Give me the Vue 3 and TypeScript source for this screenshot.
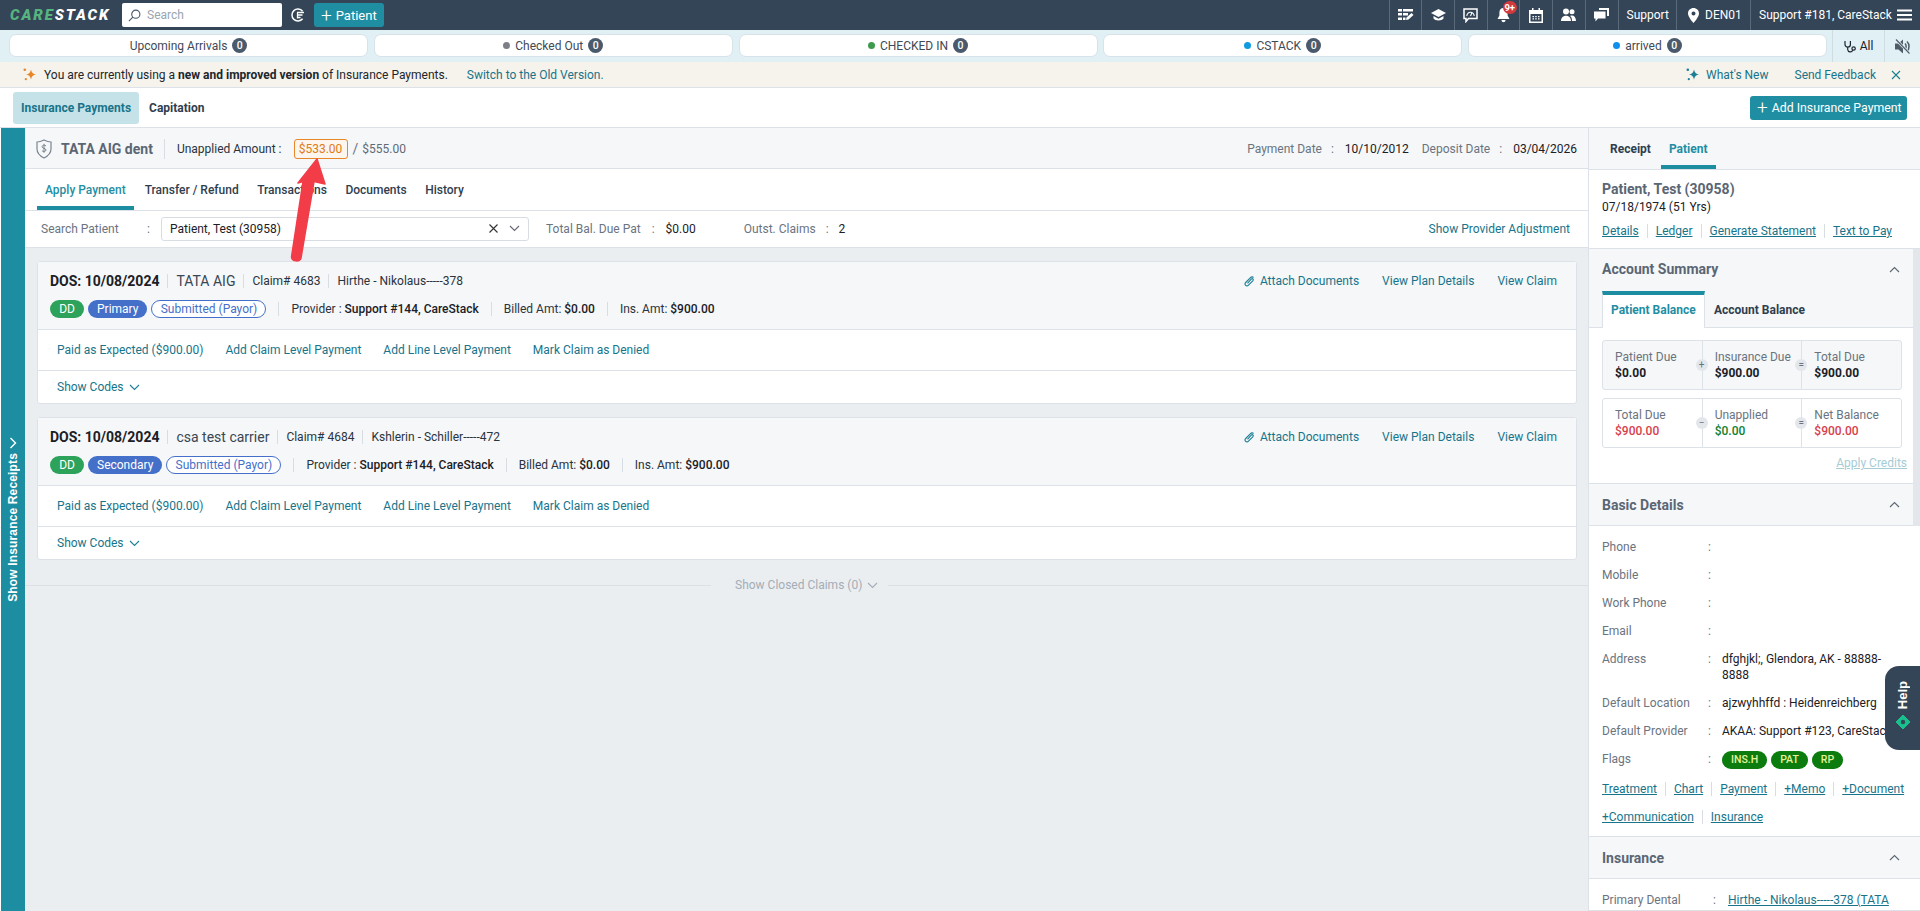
<script setup lang="ts">
interface Claim {
  carrier: string;
  claimNo: string;
  subscriber: string;
  rank: string;
}

const statusPills = [
  { label: 'Upcoming Arrivals', dot: '' },
  { label: 'Checked Out', dot: '#7c8086' },
  { label: 'CHECKED IN', dot: '#3f9a4e' },
  { label: 'CSTACK', dot: '#0f9be0' },
  { label: 'arrived', dot: '#0f8fee' },
];

const claims: Claim[] = [
  { carrier: 'TATA AIG', claimNo: '4683', subscriber: 'Hirthe - Nikolaus-----378', rank: 'Primary' },
  { carrier: 'csa test carrier', claimNo: '4684', subscriber: 'Kshlerin - Schiller-----472', rank: 'Secondary' },
];

const claimActions = ['Paid as Expected ($900.00)', 'Add Claim Level Payment', 'Add Line Level Payment', 'Mark Claim as Denied'];
const pageTabs = ['Transfer / Refund', 'Transactions', 'Documents', 'History'];

const balanceRows = [
  [
    { label: 'Patient Due', value: '$0.00', tone: '', op: '+' },
    { label: 'Insurance Due', value: '$900.00', tone: '', op: '=' },
    { label: 'Total Due', value: '$900.00', tone: '', op: '' },
  ],
  [
    { label: 'Total Due', value: '$900.00', tone: 'red', op: '−' },
    { label: 'Unapplied', value: '$0.00', tone: 'green', op: '=' },
    { label: 'Net Balance', value: '$900.00', tone: 'red', op: '' },
  ],
];

const details = [
  { label: 'Phone', value: '' },
  { label: 'Mobile', value: '' },
  { label: 'Work Phone', value: '' },
  { label: 'Email', value: '' },
  { label: 'Address', value: 'dfghjkl;, Glendora, AK - 88888-8888' },
  { label: 'Default Location', value: 'ajzwyhhffd : Heidenreichberg' },
  { label: 'Default Provider', value: 'AKAA: Support #123, CareStack' },
];

const flags = ['INS.H', 'PAT', 'RP'];
const quickLinks = [
  ['Treatment', 'Chart', 'Payment', '+Memo', '+Document'],
  ['+Communication', 'Insurance'],
];
</script>

<template>
  <div class="page">
    <header class="topbar">
      <div class="logo"><span class="logo-care">CARE</span><span>STACK</span></div>
      <div class="search">
        <svg width="13" height="13" viewBox="0 0 14 14" fill="none" stroke="#46586a" stroke-width="1.2">
          <circle cx="8.4" cy="5.6" r="4.4" />
          <path d="M5.2 8.8 1 13" />
        </svg>
        <span>Search</span>
      </div>
      <svg class="recent" width="16" height="16" viewBox="0 0 16 16" fill="none" stroke="#fff" stroke-width="1.5">
        <path d="M12.6 11.8A6 6 0 1 1 12.6 4.2" />
        <path d="M7 5.5h7M7.5 8h5M7.5 10.500h3M7.500 5.500v6" stroke-width="1.3" />
      </svg>
      <button class="btn patient-btn"><span class="plus">+</span>Patient</button>

      <div class="topbar-right">
        <div class="top-icon">
          <svg width="16" height="14" viewBox="0 0 16 14" fill="#fff">
            <path d="M0 1h4v2.500H0zM5 1h10v2.500H5zM0 5h4v2.500H0zM0 9.500h4V12H0zM5 5h5v2.500H5zM5 9.500h2.500V12H5z" />
            <path d="m8 12 .5-2.500L13.500 5l2 2-5 4.500z" />
          </svg>
        </div>
        <div class="top-icon">
          <svg width="15" height="13" viewBox="0 0 15 13" fill="#fff">
            <path d="M7.500 0 15 4l-7.500 4L0 4z" />
            <path d="M2.500 7v2.500C4 12 11 12 12.500 9.500V7l-5 2.700z" />
          </svg>
        </div>
        <div class="top-icon">
          <svg width="15" height="15" viewBox="0 0 15 15" fill="none" stroke="#fff" stroke-width="1.500">
            <path d="M1 1h13v9.500H5.500L3 13.500v-3H1z" />
            <path d="M3.800 8a3.700 3.700 0 1 1 7.400 0M7.500 8l1.300-3" stroke-width="1.100" />
          </svg>
        </div>
        <div class="top-icon bell">
          <svg width="13" height="15" viewBox="0 0 13 15" fill="#fff">
            <path d="M6.500 0C3.800 0 2.400 2 2.400 4.500v3L.5 11h12l-1.900-3.500v-3C10.600 2 9.200 0 6.500 0zM4.500 12h4c0 3-4 3-4 0z" />
          </svg>
          <span class="bell-badge">9+</span>
        </div>
        <div class="top-icon">
          <svg width="14" height="15" viewBox="0 0 14 15" fill="#fff">
            <path d="M3 0h1.500v2h5V0H11v2h3v13H0V2h3zM1.500 6v7.500h11V6z" />
            <path d="M3.500 8h1.500v1.300H3.500zM6.200 8h1.500v1.300H6.200zM9 8h1.500v1.300H9zM3.500 10.300h1.500v1.300H3.500zM6.200 10.300h1.500v1.300H6.200zM9 10.300h1.500v1.300H9z" />
          </svg>
        </div>
        <div class="top-icon">
          <svg width="15" height="14" viewBox="0 0 15 14" fill="#fff">
            <circle cx="5" cy="3.500" r="3" />
            <circle cx="11" cy="3.800" r="2.500" />
            <path d="M0 13c0-7 10-7 10 0zM11 13c0-2.500-.5-4-2-5 3-1.500 6 .5 6 5z" />
          </svg>
        </div>
        <div class="top-icon">
          <svg width="15" height="14" viewBox="0 0 15 14" fill="#fff">
            <path d="M5 0h10v8h-2V2H5z" />
            <path d="M0 3.500h11.500v7H4L1.500 13.500v-3H0z" />
          </svg>
        </div>
        <div class="top-item support">Support</div>
        <div class="top-item location">
          <svg width="11" height="15" viewBox="0 0 11 15" fill="#fff">
            <path fill-rule="evenodd" d="M5.500 0C2.500 0 0 2.300 0 5.400 0 9 5.500 15 5.500 15S11 9 11 5.400C11 2.300 8.500 0 5.500 0zm0 3.500a2 2 0 1 1 0 4 2 2 0 0 1 0-4z" />
          </svg>
          DEN01
        </div>
        <div class="top-item user">
          Support #181, CareStack
          <svg width="15" height="12" viewBox="0 0 15 12" fill="#fff">
            <path d="M0 .5h15v2H0zM0 5h15v2H0zM0 9.500h15v2H0z" />
          </svg>
        </div>
      </div>
    </header>

    <div class="status-row">
      <div class="status-pills">
        <div v-for="pill in statusPills" :key="pill.label" class="status-pill">
          <i v-if="pill.dot" class="dot" :style="{ background: pill.dot }"></i>
          <span>{{ pill.label }}</span>
          <b class="count">0</b>
        </div>
      </div>
      <div class="status-all">
        <svg width="12" height="13" viewBox="0 0 12 13" fill="none" stroke="#1c2530" stroke-width="1.200">
          <path d="M1 1v3.500a2.700 2.700 0 0 0 5.400 0V1M3.700 7.200v2.300a2.600 2.600 0 0 0 5 .8" />
          <circle cx="9.600" cy="8.500" r="1.700" />
        </svg>
        All
      </div>
      <div class="status-mute">
        <svg width="17" height="15" viewBox="0 0 17 15" fill="#4f5b66">
          <path d="M1 4.500h3.500L9 .5v14l-4.500-4H1z" />
          <path d="M11 4.500c1.500 1.500 1.500 4.500 0 6M13 2.500c2.700 2.700 2.700 7.300 0 10" fill="none" stroke="#4f5b66" stroke-width="1.500" />
          <path d="m2 .5 13.500 14" stroke="#e1f0f5" stroke-width="2.600" />
          <path d="m2 .5 13.500 14" stroke="#4f5b66" stroke-width="1.100" />
        </svg>
      </div>
    </div>

    <div class="banner">
      <svg class="spark" width="13" height="13" viewBox="0 0 13 13" fill="#e8862a">
        <path d="M8 1.500c.6 3 2 4.500 5 5-3 .5-4.400 2-5 5-.6-3-2-4.500-5-5 3-.5 4.400-2 5-5z" />
        <circle cx="1.800" cy="1.800" r="1.300" />
        <circle cx="2.800" cy="11.200" r="1.100" />
      </svg>
      <span class="banner-text">You are currently using a <b>new and improved version</b> of Insurance Payments.</span>
      <a class="link switch">Switch to the Old Version.</a>
      <div class="banner-right">
        <svg width="13" height="13" viewBox="0 0 13 13" fill="#1b7f94">
          <path d="M8 1.500c.6 3 2 4.500 5 5-3 .5-4.400 2-5 5-.6-3-2-4.500-5-5 3-.5 4.400-2 5-5z" />
          <circle cx="1.800" cy="1.800" r="1.300" />
          <circle cx="2.800" cy="11.200" r="1.100" />
        </svg>
        <a class="link whats">What's New</a>
        <a class="link">Send Feedback</a>
        <svg class="close" width="10" height="10" viewBox="0 0 10 10" stroke="#1b7f94" stroke-width="1.100">
          <path d="m1 1 8 8M9 1 1 9" />
        </svg>
      </div>
    </div>

    <div class="module-tabs">
      <div class="module-tab active">Insurance Payments</div>
      <div class="module-tab">Capitation</div>
      <button class="btn add-btn"><span class="plus">+</span>Add Insurance Payment</button>
    </div>

    <div class="workspace">
      <aside class="receipts-strip">
        <span class="strip-label">Show Insurance Receipts</span>
        <svg width="8" height="12" viewBox="0 0 8 12" fill="none" stroke="#fff" stroke-width="1.400">
          <path d="m1.500 1 5 5-5 5" />
        </svg>
      </aside>

      <main class="center">
        <div class="pay-head">
          <svg width="16" height="20" viewBox="0 0 16 20" fill="none" stroke="#7b8590" stroke-width="1.200">
            <path d="M1 3c2.500 0 5-1 7-2 2 1 4.500 2 7 2v7c0 4-3 7-7 9-4-2-7-5-7-9z" />
            <path d="M10 7c-1-1.300-4-1-4 .7 0 2 4 1.300 4 3.300 0 1.700-3 2-4 .7M8 4.800v9" stroke-width="1" />
          </svg>
          <span class="carrier-name">TATA AIG dent</span>
          <i class="vsep tall"></i>
          <span class="unapplied">Unapplied Amount :</span>
          <span class="amount-badge">$533.00</span>
          <span class="amount-slash">/</span>
          <span class="amount-total">$555.00</span>
          <div class="dates">
            <span class="muted">Payment Date</span><span class="muted colon">:</span><span>10/10/2012</span>
            <span class="muted deposit">Deposit Date</span><span class="muted colon">:</span><span>03/04/2026</span>
          </div>
        </div>

        <nav class="page-tabs">
          <div class="page-tab active">Apply Payment</div>
          <div v-for="tab in pageTabs" :key="tab" class="page-tab">{{ tab }}</div>
        </nav>

        <div class="search-row">
          <span class="muted sp-label">Search Patient</span>
          <span class="muted sp-colon">:</span>
          <div class="patient-select">
            <span>Patient, Test (30958)</span>
            <svg class="sel-x" width="9" height="9" viewBox="0 0 9 9" stroke="#333" stroke-width="1.100">
              <path d="m.5.5 8 8M8.500.5l-8 8" />
            </svg>
            <svg width="11" height="7" viewBox="0 0 11 7" fill="none" stroke="#667" stroke-width="1.100">
              <path d="m1 1 4.500 4.500L10 1" />
            </svg>
          </div>
          <span class="muted">Total Bal. Due Pat</span>
          <span class="muted bal-colon">:</span>
          <span class="bal-val">$0.00</span>
          <span class="muted">Outst. Claims</span>
          <span class="muted bal-colon claims-colon">:</span>
          <span>2</span>
          <a class="link provider-adj">Show Provider Adjustment</a>
        </div>

        <div class="claims">
          <section v-for="claim in claims" :key="claim.claimNo" class="claim-card">
            <div class="claim-head">
              <div class="claim-line first">
                <b class="dos">DOS: 10/08/2024</b>
                <i class="vsep"></i>
                <span class="carrier">{{ claim.carrier }}</span>
                <i class="vsep"></i>
                <span>Claim# {{ claim.claimNo }}</span>
                <i class="vsep"></i>
                <span>{{ claim.subscriber }}</span>
                <div class="claim-links">
                  <a class="link attach">
                    <svg width="11" height="11" viewBox="0 0 11 11" fill="none" stroke="#1b7f94" stroke-width="1.100">
                      <path d="M9.500 1.500c-1-1-2-.8-3 .2L1.700 6.500c-1 1-1 2 0 2.800.8.800 1.800.8 2.800-.2l4.300-4.300c.7-.7.7-1.300.2-1.800s-1.100-.5-1.800.2L3.500 7.300" />
                    </svg>
                    Attach Documents
                  </a>
                  <a class="link">View Plan Details</a>
                  <a class="link">View Claim</a>
                </div>
              </div>
              <div class="claim-line second">
                <span class="chip dd">DD</span>
                <span class="chip rank">{{ claim.rank }}</span>
                <span class="chip outline">Submitted (Payor)</span>
                <i class="vsep chip-sep"></i>
                <span>Provider : <b class="m">Support #144, CareStack</b></span>
                <i class="vsep"></i>
                <span>Billed Amt: <b class="m">$0.00</b></span>
                <i class="vsep"></i>
                <span>Ins. Amt: <b class="m">$900.00</b></span>
              </div>
            </div>
            <div class="claim-actions">
              <a v-for="action in claimActions" :key="action" class="link">{{ action }}</a>
            </div>
            <div class="claim-codes">
              <a class="link">Show Codes</a>
              <svg width="11" height="7" viewBox="0 0 11 7" fill="none" stroke="#1b7f94" stroke-width="1.100">
                <path d="m1 1 4.500 4.500L10 1" />
              </svg>
            </div>
          </section>
        </div>

        <div class="closed-claims">
          <i class="line-left"></i>
          <span>Show Closed Claims (0)</span>
          <svg width="11" height="7" viewBox="0 0 11 7" fill="none" stroke="#a3adb6" stroke-width="1.100">
            <path d="m1 1 4.500 4.500L10 1" />
          </svg>
          <i class="line-right"></i>
        </div>
      </main>

      <aside class="side">
        <div class="side-tabs">
          <div class="side-tab">Receipt</div>
          <div class="side-tab active">Patient</div>
        </div>
        <div class="side-patient">
          <div class="side-name">Patient, Test (30958)</div>
          <div class="side-dob">07/18/1974 (51 Yrs)</div>
          <div class="u-links">
            <a>Details</a><a>Ledger</a><a>Generate Statement</a><a>Text to Pay</a>
          </div>
        </div>

        <div class="side-scroll">
          <div class="scroll-thumb"></div>

          <div class="side-head first">
            <span>Account Summary</span>
            <svg width="11" height="7" viewBox="0 0 11 7" fill="none" stroke="#5c6773" stroke-width="1.100">
              <path d="m1 6 4.500-4.500L10 6" />
            </svg>
          </div>
          <div class="summary-tabs">
            <div class="summary-tab active">Patient Balance</div>
            <div class="summary-tab">Account Balance</div>
          </div>
          <div class="summary">
            <div v-for="(row, i) in balanceRows" :key="i" class="bal-row" :class="{ shaded: i === 0 }">
              <div v-for="cell in row" :key="cell.label" class="bal-cell">
                <span class="muted">{{ cell.label }}</span>
                <b :class="cell.tone">{{ cell.value }}</b>
                <i v-if="cell.op" class="op">{{ cell.op }}</i>
              </div>
            </div>
            <a class="apply-credits">Apply Credits</a>
          </div>

          <div class="side-head">
            <span>Basic Details</span>
            <svg width="11" height="7" viewBox="0 0 11 7" fill="none" stroke="#5c6773" stroke-width="1.100">
              <path d="m1 6 4.500-4.500L10 6" />
            </svg>
          </div>
          <div class="basic">
            <div v-for="row in details" :key="row.label" class="detail-row">
              <span class="muted">{{ row.label }}</span>
              <span class="muted">:</span>
              <span class="detail-val">{{ row.value }}</span>
            </div>
            <div class="detail-row flags-row">
              <span class="muted">Flags</span>
              <span class="muted">:</span>
              <span class="flags"><b v-for="flag in flags" :key="flag">{{ flag }}</b></span>
            </div>
            <div v-for="(line, i) in quickLinks" :key="i" class="u-links quick">
              <a v-for="item in line" :key="item">{{ item }}</a>
            </div>
          </div>

          <div class="side-head">
            <span>Insurance</span>
            <svg width="11" height="7" viewBox="0 0 11 7" fill="none" stroke="#5c6773" stroke-width="1.100">
              <path d="m1 6 4.500-4.500L10 6" />
            </svg>
          </div>
          <div class="insurance-row">
            <span class="muted">Primary Dental</span>
            <span class="muted">:</span>
            <a>Hirthe - Nikolaus-----378 (TATA AIG)</a>
          </div>
        </div>
      </aside>
    </div>

    <!-- annotation arrow drawn over the screenshot -->
    <svg class="arrow" width="50" height="120" viewBox="0 0 50 120">
      <path d="M30 3 38 28 27 25.500 14 102c-1 4-9 4-9.500-1L16 25.500 11 27z" fill="#f23d49" stroke="#f23d49" stroke-width="1.500" stroke-linejoin="round" />
    </svg>

    <div class="help-tab">
      <span>Help</span>
      <svg width="14" height="14" viewBox="0 0 14 14">
        <path d="M7 0 14 7 7 14 0 7z" fill="#17c08c" stroke="#17c08c" stroke-linejoin="round" stroke-width="1" />
        <circle cx="7" cy="7" r="2.200" fill="#344557" />
      </svg>
    </div>
  </div>
</template>

<style>
html,
body {
  margin: 0;
  overflow: hidden;
}
</style>

<style scoped>
.page {
  position: relative;
  width: 1920px;
  height: 911px;
  overflow: hidden;
  display: flex;
  flex-direction: column;
  font-family: Roboto, "Liberation Sans", sans-serif;
  font-size: 12px;
  color: #1b2026;
  background: #fff;
}

a { cursor: pointer; }
.link { color: #17748a; white-space: nowrap; }
.muted { color: #6a7480; }

.btn {
  display: flex;
  align-items: center;
  border: 0;
  border-radius: 3px;
  background: #1f8ea3;
  color: #fff;
  font: inherit;
}
.plus { font-size: 19px; font-weight: 300; line-height: 1; margin-right: 4px; }

/* top bar */
.topbar {
  flex: 0 0 30px;
  display: flex;
  align-items: center;
  background: #344557;
  color: #fff;
}
.logo {
  width: 122px;
  padding-left: 10px;
  box-sizing: border-box;
  font-size: 15px;
  font-weight: 900;
  font-style: italic;
  letter-spacing: 1.900px;
  white-space: nowrap;
  color: #fff;
}
.logo-care { color: #55b57f; }
.search {
  width: 160px;
  height: 24px;
  box-sizing: border-box;
  display: flex;
  align-items: center;
  gap: 6px;
  padding-left: 6px;
  background: #fff;
  border-radius: 2px;
  color: #9aa5b0;
}
.recent { margin: 0 8px; }
.patient-btn { width: 70px; height: 24px; padding: 0 0 0 7px; box-sizing: border-box; font-size: 13px; }
.topbar-right { margin-left: auto; display: flex; height: 30px; }
.top-icon {
  position: relative;
  width: 32.700px;
  display: flex;
  align-items: center;
  justify-content: center;
  border-left: 1px solid #5a6a7a;
  box-sizing: border-box;
}
.bell-badge {
  position: absolute;
  top: 1px;
  left: 15px;
  min-width: 14px;
  height: 13px;
  border-radius: 7px;
  background: #d03a3f;
  font-size: 9.500px;
  font-weight: 700;
  line-height: 13px;
  text-align: center;
}
.top-item {
  display: flex;
  align-items: center;
  box-sizing: border-box;
  border-left: 1px solid #5a6a7a;
  white-space: nowrap;
}
.support { width: 58.500px; padding-left: 8px; }
.location { width: 74px; padding-left: 11px; gap: 6px; }
.user { width: 170px; padding-left: 8px; gap: 5px; }

/* status row */
.status-row {
  flex: 0 0 32px;
  display: flex;
  background: #e1f0f5;
}
.status-pills { display: flex; gap: 5.750px; padding: 4px 5px 0 9px; }
.status-pill {
  width: 359px;
  height: 23px;
  display: flex;
  align-items: center;
  justify-content: center;
  gap: 4px;
  background: #fff;
  border: 1px solid #d8e3e9;
  border-radius: 7px;
  box-sizing: border-box;
  color: #3f4a56;
}
.dot { width: 7px; height: 7px; border-radius: 50%; margin-right: 1px; }
.count {
  width: 15px;
  height: 15px;
  border-radius: 50%;
  background: #4a5a6c;
  color: #fff;
  font-size: 10.500px;
  font-weight: 500;
  line-height: 15px;
  text-align: center;
  margin-left: 1px;
}
.status-all {
  width: 53px;
  display: flex;
  align-items: center;
  justify-content: center;
  gap: 4px;
  border-left: 1px solid #cfdde3;
  border-right: 1px solid #cfdde3;
  box-sizing: border-box;
}
.status-mute { flex: 1; display: flex; align-items: center; justify-content: center; }

/* banner */
.banner {
  flex: 0 0 25px;
  display: flex;
  align-items: center;
  background: #f6f3ec;
  padding: 0 19px 0 23px;
  box-sizing: border-box;
}
.banner-text { margin-left: 8px; color: #20262c; }
.banner-text b { font-weight: 700; }
.switch { margin-left: 19px; }
.banner-right { margin-left: auto; display: flex; align-items: center; }
.whats { margin-left: 7px; margin-right: 26px; }
.close { margin-left: 15px; }

/* module tabs */
.module-tabs {
  flex: 0 0 41px;
  display: flex;
  align-items: center;
  padding: 0 13px;
  box-sizing: border-box;
  border-top: 1px solid #dde2e8;
  border-bottom: 1px solid #dde2e8;
  font-weight: 700;
  color: #2f3e4e;
}
.module-tab { height: 32px; line-height: 32px; padding: 0 8px; border-radius: 3px; }
.module-tab.active { background: #c5e2e8; color: #17748a; margin-right: 2px; }
.add-btn {
  margin-left: auto;
  height: 24px;
  width: 157px;
  padding-left: 7px;
  box-sizing: border-box;
  font-weight: 400;
  font-size: 12.300px;
  white-space: nowrap;
}

.workspace { flex: 1; min-height: 0; display: flex; }

/* left strip */
.receipts-strip {
  width: 24px;
  margin-left: 1px;
  background: #1d8da2;
  display: flex;
  flex-direction: column-reverse;
  align-items: center;
  justify-content: flex-start;
  gap: 4px;
  padding-bottom: 309px;
  box-sizing: border-box;
  color: #fff;
}
.strip-label {
  writing-mode: vertical-rl;
  transform: rotate(180deg);
  font-family: "Liberation Sans", Arial, sans-serif;
  font-size: 12px;
  font-weight: 700;
  letter-spacing: 0.150px;
  white-space: nowrap;
}

/* centre column */
.center {
  width: 1564px;
  flex: none;
  display: flex;
  flex-direction: column;
  background: #ebeef1;
  border-right: 1px solid #dde2e8;
  box-sizing: border-box;
}
.pay-head {
  flex: 0 0 41px;
  box-sizing: border-box;
  display: flex;
  align-items: center;
  padding: 1px 11px 0 11px;
  background: #f5f7f9;
  border-bottom: 1px solid #dde2e8;
}
.carrier-name { margin-left: 9px; font-size: 14px; font-weight: 700; color: #5b6674; }
.vsep { width: 1px; height: 14px; background: #d8dde3; margin: 0 8px; flex: none; }
.vsep.tall { height: 20px; margin: 0 12px 0 11px; }
.unapplied { color: #2b333c; }
.amount-badge {
  margin-left: 12px;
  width: 54px;
  height: 20px;
  box-sizing: border-box;
  border: 1px solid #e8862a;
  border-radius: 3px;
  background: #fdf6ee;
  color: #e07b14;
  line-height: 18px;
  text-align: center;
}
.amount-slash { margin-left: 5px; font-size: 14px; color: #6a7480; }
.amount-total { margin-left: 4px; color: #5f6a76; }
.dates { margin-left: auto; display: flex; align-items: center; }
.colon { margin: 0 11px 0 9px; }
.deposit { margin-left: 13px; }

.page-tabs {
  flex: 0 0 41px;
  box-sizing: border-box;
  display: flex;
  padding-left: 12px;
  background: #fff;
  border-bottom: 1px solid #dde2e8;
  font-weight: 500;
  color: #2f3e4e;
}
.page-tab { padding: 0 8px; margin-right: 2.500px; line-height: 43px; height: 41px; box-sizing: border-box; }
.page-tab.active { color: #1f8ea3; border-bottom: 4px solid #1d8da2; margin-right: 3px; }

.search-row {
  flex: 0 0 37px;
  box-sizing: border-box;
  display: flex;
  align-items: center;
  padding: 0 18px 1px 16px;
  background: #fff;
  border-bottom: 1px solid #dde2e8;
}
.sp-label { width: 106px; }
.sp-colon { width: 14px; }
.patient-select {
  width: 368px;
  height: 24px;
  margin-right: 17px;
  box-sizing: border-box;
  display: flex;
  align-items: center;
  padding: 0 8px;
  border: 1px solid #d8dde3;
  border-radius: 3px;
}
.sel-x { margin-left: auto; margin-right: 11px; }
.bal-colon { margin: 0 11px; }
.bal-val { margin-right: 48px; }
.claims-colon { margin: 0 10px 0 10px; }
.provider-adj { margin-left: auto; }

.claims { display: flex; flex-direction: column; gap: 13px; padding: 13px 11px 0 12px; }
.claim-card {
  height: 143px;
  box-sizing: border-box;
  display: flex;
  flex-direction: column;
  background: #fff;
  border: 1px solid #dde2e8;
  border-radius: 3px;
}
.claim-head {
  flex: 0 0 68px;
  box-sizing: border-box;
  padding-left: 12px;
  background: #f5f7f9;
  border-bottom: 1px solid #dde2e8;
}
.claim-line { display: flex; align-items: center; white-space: nowrap; color: #2b333c; }
.claim-line.first { height: 38px; box-sizing: border-box; }
.claim-line.second { height: 18px; }
.dos { font-size: 14px; font-weight: 700; color: #1b2026; }
.carrier { font-size: 14px; color: #3a4653; }
.m { font-weight: 500; color: #1b2026; }
.claim-links { margin-left: auto; display: flex; gap: 23px; padding-right: 19px; }
.attach { display: flex; align-items: center; gap: 5px; }
.chip {
  height: 18px;
  box-sizing: border-box;
  border-radius: 9px;
  line-height: 18px;
  text-align: center;
  color: #fff;
  margin-right: 4px;
}
.chip.dd { width: 34px; background: #2ca25a; }
.chip.rank { padding: 0 9px; background: #4570c9; }
.chip.outline { width: 115px; line-height: 16px; background: #fff; border: 1px solid #4570c9; color: #4570c9; }
.chip-sep { margin: 0 12px 0 8px; }
.claim-line.second .vsep:not(.chip-sep) { margin: 0 12px; }
.claim-actions {
  flex: 0 0 41px;
  box-sizing: border-box;
  display: flex;
  align-items: center;
  gap: 22px;
  padding-left: 19px;
  border-bottom: 1px solid #dde2e8;
}
.claim-codes { flex: 1; display: flex; align-items: center; gap: 5px; padding-left: 19px; }

.closed-claims {
  display: flex;
  align-items: center;
  margin-top: 18px;
  color: #a3adb6;
}
.closed-claims i { height: 1px; background: #dcdfe4; }
.line-left { flex: 0 0 686px; }
.line-right { flex: 1; }
.closed-claims span { margin-left: 24px; }
.closed-claims svg { margin: 0 10px 0 5px; }

/* right column */
.side { flex: 1; min-width: 0; display: flex; flex-direction: column; border-bottom: 1px solid #dde2e8; }
.side-tabs {
  flex: 0 0 41px;
  box-sizing: border-box;
  display: flex;
  padding-left: 13px;
  background: #f5f7f9;
  border-bottom: 1px solid #dde2e8;
  font-weight: 700;
  color: #2f3e4e;
}
.side-tab { padding: 0 8px; line-height: 43px; height: 41px; box-sizing: border-box; margin-right: 2px; }
.side-tab.active { color: #1f8ea3; border-bottom: 4px solid #1d8da2; }
.side-patient {
  flex: 0 0 79px;
  box-sizing: border-box;
  padding: 11px 13px 0;
  border-bottom: 1px solid #dde2e8;
}
.side-name { font-size: 14px; font-weight: 700; line-height: 17px; color: #5b6674; }
.side-dob { font-size: 12px; line-height: 17px; margin-top: 1px; }
.u-links { display: flex; flex-wrap: nowrap; align-items: center; margin-top: 7px; line-height: 16px; }
.u-links a {
  color: #17748a;
  text-decoration: underline;
  white-space: nowrap;
}
.u-links a + a { position: relative; margin-left: 17px; }
.u-links a + a::before {
  content: "";
  position: absolute;
  left: -9px;
  top: 1px;
  width: 1px;
  height: 14px;
  background: #d8dde3;
}

.side-scroll { position: relative; flex: 1; min-height: 0; overflow: hidden; }
.scroll-thumb {
  position: absolute;
  top: 0;
  right: 0;
  width: 7px;
  height: 277px;
  background: #e3e6ea;
  z-index: 1;
}
.side-head {
  height: 42px;
  box-sizing: border-box;
  display: flex;
  align-items: center;
  justify-content: space-between;
  padding: 0 20px 0 13px;
  background: #f5f7f9;
  border-bottom: 1px solid #dde2e8;
  font-size: 14px;
  font-weight: 700;
  color: #5b6674;
}
.side-head.first { border-bottom: 0; padding-bottom: 2px; }
.summary-tabs {
  display: flex;
  height: 37px;
  box-sizing: border-box;
  padding-left: 13px;
  background: #f5f7f9;
  border-bottom: 1px solid #dde2e8;
  font-weight: 700;
  color: #2f3e4e;
}
.summary-tab { padding: 0 9px; line-height: 38px; box-sizing: border-box; white-space: nowrap; }
.summary-tab.active {
  width: 103px;
  height: 37px;
  padding: 0 8px;
  line-height: 30px;
  color: #1f8ea3;
  background: #fff;
  border-top: 4px solid #1d8da2;
  border-right: 1px solid #dde2e8;
  border-left: 1px solid #dde2e8;
}
.summary { padding: 12px 11px 0 13px; height: 156px; box-sizing: border-box; border-bottom: 1px solid #dde2e8; position: relative; }
.bal-row {
  display: flex;
  width: 300px;
  height: 50px;
  box-sizing: border-box;
  margin-bottom: 8px;
  border: 1px solid #dde2e8;
  border-radius: 3px;
}
.bal-row.shaded { background: #f5f7f9; }
.bal-cell {
  position: relative;
  flex: 1;
  display: flex;
  flex-direction: column;
  justify-content: center;
  padding-left: 12px;
  line-height: 16px;
  border-left: 1px solid #dde2e8;
}
.bal-cell:first-child { border-left: 0; }
.bal-cell b { font-weight: 700; color: #1b2026; }
.bal-cell b.red { color: #d8404c; font-weight: 500; }
.bal-cell b.green { color: #11802f; font-weight: 500; }
.op {
  position: absolute;
  right: -6px;
  top: 18px;
  width: 12px;
  height: 12px;
  border-radius: 50%;
  background: #e3e7ec;
  color: #6a7480;
  font-size: 10px;
  font-style: normal;
  line-height: 11px;
  text-align: center;
  z-index: 1;
}
.apply-credits {
  position: absolute;
  right: 13px;
  top: 128px;
  color: #a6ccd5;
  text-decoration: underline;
}

.basic { height: 311px; box-sizing: border-box; padding: 7px 11px 0 13px; border-bottom: 1px solid #dde2e8; }
.detail-row {
  display: grid;
  grid-template-columns: 106px 14px 172px;
  line-height: 16px;
  padding: 6px 0;
}
.detail-val { color: #1b2026; }
.detail-row:nth-child(7) .detail-val { white-space: nowrap; }
.flags-row { height: 30px; box-sizing: border-box; padding-bottom: 0; }
.flags { display: flex; gap: 4px; }
.flags b {
  height: 18px;
  padding: 0 9px;
  border-radius: 9px;
  background: #0b7c0d;
  color: #e4f29a;
  font-size: 10.500px;
  font-weight: 500;
  line-height: 18px;
}
.u-links.quick { margin-top: 0; height: 28px; }
.insurance-row {
  display: grid;
  grid-template-columns: 111px 15px 165px;
  padding: 13px 13px 0;
  line-height: 16px;
}
.insurance-row a { color: #17748a; text-decoration: underline; }

/* overlays */
.arrow { position: absolute; left: 287px; top: 156px; z-index: 3; }
.help-tab {
  position: absolute;
  right: 0;
  top: 666px;
  width: 35px;
  height: 84px;
  display: flex;
  flex-direction: column;
  align-items: center;
  gap: 6px;
  padding-top: 15px;
  box-sizing: border-box;
  background: #344557;
  border-radius: 14px 0 0 14px;
  z-index: 4;
  color: #fff;
}
.help-tab span {
  writing-mode: vertical-rl;
  transform: rotate(180deg);
  font-family: "Liberation Sans", Arial, sans-serif;
  font-size: 13px;
  font-weight: 700;
}
</style>
